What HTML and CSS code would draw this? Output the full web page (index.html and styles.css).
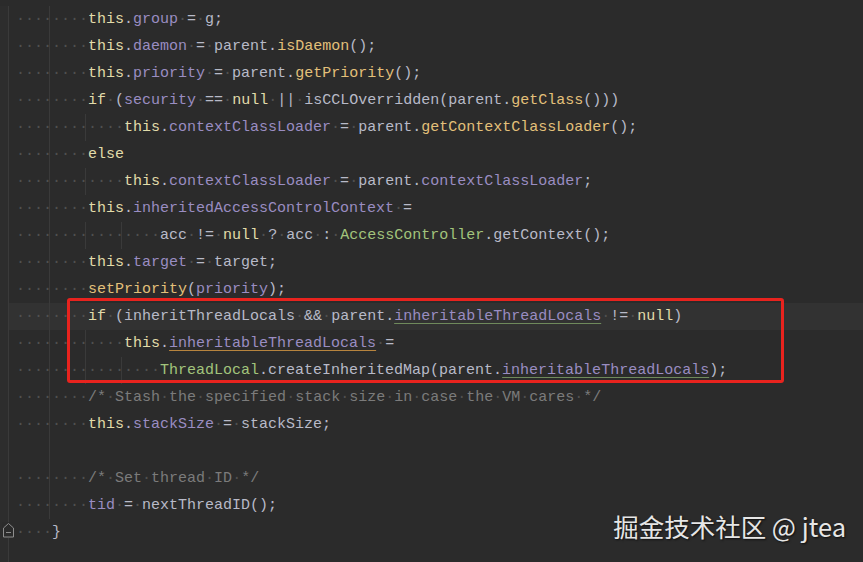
FILE: index.html
```html
<!DOCTYPE html>
<html lang="zh">
<head>
<meta charset="utf-8">
<title>Thread init</title>
<link rel="stylesheet" href="styles.css">
</head>
<body>
<div class="editor">
  <div class="row g1"><div class="gut"></div><div class="code"><span class="w">········</span><span class="k">this</span>.<span class="f">group</span><span class="w">·</span>=<span class="w">·</span>g;</div></div>
  <div class="row g1"><div class="gut"></div><div class="code"><span class="w">········</span><span class="k">this</span>.<span class="f">daemon</span><span class="w">·</span>=<span class="w">·</span>parent.<span class="m">isDaemon</span>();</div></div>
  <div class="row g1"><div class="gut"></div><div class="code"><span class="w">········</span><span class="k">this</span>.<span class="f">priority</span><span class="w">·</span>=<span class="w">·</span>parent.<span class="m">getPriority</span>();</div></div>
  <div class="row g1"><div class="gut"></div><div class="code"><span class="w">········</span><span class="k">if</span><span class="w">·</span>(<span class="f">security</span><span class="w">·</span>==<span class="w">·</span><span class="k">null</span><span class="w">·</span>||<span class="w">·</span>isCCLOverridden(parent.<span class="m">getClass</span>()))</div></div>
  <div class="row g2"><div class="gut"></div><div class="code"><span class="w">············</span><span class="k">this</span>.<span class="f">contextClassLoader</span><span class="w">·</span>=<span class="w">·</span>parent.<span class="m">getContextClassLoader</span>();</div></div>
  <div class="row g1"><div class="gut"></div><div class="code"><span class="w">········</span><span class="k">else</span></div></div>
  <div class="row g2"><div class="gut"></div><div class="code"><span class="w">············</span><span class="k">this</span>.<span class="f">contextClassLoader</span><span class="w">·</span>=<span class="w">·</span>parent.<span class="f">contextClassLoader</span>;</div></div>
  <div class="row g1"><div class="gut"></div><div class="code"><span class="w">········</span><span class="k">this</span>.<span class="f">inheritedAccessControlContext</span><span class="w">·</span>=</div></div>
  <div class="row g3"><div class="gut"></div><div class="code"><span class="w">················</span>acc<span class="w">·</span>!=<span class="w">·</span><span class="k">null</span><span class="w">·</span>?<span class="w">·</span>acc<span class="w">·</span>:<span class="w">·</span><span class="c">AccessController</span>.getContext();</div></div>
  <div class="row g1"><div class="gut"></div><div class="code"><span class="w">········</span><span class="k">this</span>.<span class="f">target</span><span class="w">·</span>=<span class="w">·</span>target;</div></div>
  <div class="row g1"><div class="gut"></div><div class="code"><span class="w">········</span><span class="m">setPriority</span>(<span class="f">priority</span>);</div></div>
  <div class="row g1 cur"><div class="gut"></div><div class="code"><span class="w">········</span><span class="k">if</span><span class="w">·</span>(inheritThreadLocals<span class="w">·</span>&amp;&amp;<span class="w">·</span>parent.<span class="f ug">inheritableThreadLocals</span><span class="w">·</span>!=<span class="w">·</span><span class="k">null</span>)</div></div>
  <div class="row g2"><div class="gut"></div><div class="code"><span class="w">············</span><span class="k">this</span>.<span class="f uo">inheritableThreadLocals</span><span class="w">·</span>=</div></div>
  <div class="row g3"><div class="gut"></div><div class="code"><span class="w">················</span><span class="c">ThreadLocal</span>.createInheritedMap(parent.<span class="f ug">inheritableThreadLocals</span>);</div></div>
  <div class="row g1"><div class="gut"></div><div class="code"><span class="w">········</span><span class="cm">/*<span class="w">·</span>Stash<span class="w">·</span>the<span class="w">·</span>specified<span class="w">·</span>stack<span class="w">·</span>size<span class="w">·</span>in<span class="w">·</span>case<span class="w">·</span>the<span class="w">·</span>VM<span class="w">·</span>cares<span class="w">·</span>*/</span></div></div>
  <div class="row g1"><div class="gut"></div><div class="code"><span class="w">········</span><span class="k">this</span>.<span class="f">stackSize</span><span class="w">·</span>=<span class="w">·</span>stackSize;</div></div>
  <div class="row g1"><div class="gut"></div><div class="code"></div></div>
  <div class="row g1"><div class="gut"></div><div class="code"><span class="w">········</span><span class="cm">/*<span class="w">·</span>Set<span class="w">·</span>thread<span class="w">·</span>ID<span class="w">·</span>*/</span></div></div>
  <div class="row g1"><div class="gut"></div><div class="code"><span class="w">········</span><span class="f">tid</span><span class="w">·</span>=<span class="w">·</span>nextThreadID();</div></div>
  <div class="row"><div class="gut fold"><svg class="fold-icon" width="13" height="16" viewBox="0 0 13 16"><path d="M1.5 6 L6.5 1.5 L11.5 6 V15 H1.5 Z" fill="none" stroke="#8d8d8d" stroke-width="1"/><path d="M4 10.5 H9" stroke="#8d8d8d" stroke-width="1"/></svg></div><div class="code"><span class="w">····</span>}</div></div>
  <div class="row filler"><div class="gut"></div><div class="code"></div></div>

  <div class="highlight-box"></div>
  <div class="watermark">掘金技术社区 @ jtea</div>
</div>
</body>
</html>
```

FILE: styles.css
```css
html, body {
  margin: 0;
  padding: 0;
  background: #2b2b2b;
}

.editor {
  position: relative;
  width: 863px;
  height: 562px;
  overflow: hidden;
  display: flex;
  flex-direction: column;
  padding-top: 6px;
  box-sizing: border-box;
  background: #2b2b2b;
  font-family: "Liberation Mono", "DejaVu Sans Mono", monospace;
  font-size: 15px;
  color: #b8bac8;
}

.row {
  display: grid;
  grid-template-columns: 9px 1fr;
  height: 27px;
  flex: none;
}

.row.filler {
  flex: 1;
}

.gut {
  box-sizing: border-box;
  border-right: 1px solid #3a3a3a;
  background: #2d2d2d;
  position: relative;
}

.fold-icon {
  position: absolute;
  left: 2px;
  top: 3px;
  background: #2b2b2b;
}

.code {
  padding-left: 7px;
  line-height: 27px;
  white-space: pre;
  background-repeat: no-repeat;
}

.g1 .code {
  background-image: linear-gradient(#3a3a3a, #3a3a3a);
  background-size: 1px 100%;
  background-position: 40px 0;
}

.g2 .code {
  background-image: linear-gradient(#3a3a3a, #3a3a3a), linear-gradient(#3a3a3a, #3a3a3a);
  background-size: 1px 100%, 1px 100%;
  background-position: 40px 0, 76px 0;
}

.g3 .code {
  background-image: linear-gradient(#3a3a3a, #3a3a3a), linear-gradient(#3a3a3a, #3a3a3a), linear-gradient(#3a3a3a, #3a3a3a);
  background-size: 1px 100%, 1px 100%, 1px 100%;
  background-position: 40px 0, 76px 0, 112px 0;
}

.cur .code {
  background-color: #323232;
}

.w {
  color: #505050;
}

.k {
  color: #e2dcaa;
}

.f {
  color: #9a8dc2;
}

.m {
  color: #e3c07a;
}

.c {
  color: #a2c47c;
}

.cm {
  color: #7b7b7b;
}

.ug {
  text-decoration: underline;
  text-decoration-color: #6f8a5c;
  text-underline-offset: 3px;
}

.uo {
  text-decoration: underline;
  text-decoration-color: #b7843e;
  text-underline-offset: 3px;
}

.highlight-box {
  position: absolute;
  left: 67px;
  top: 298px;
  width: 717px;
  height: 85px;
  box-sizing: border-box;
  border: 3px solid #e8231e;
  border-radius: 3px;
}

.watermark {
  position: absolute;
  right: 17px;
  top: 508px;
  font-family: "Noto Sans CJK SC", "Noto Sans", sans-serif;
  font-size: 25.5px;
  line-height: 36px;
  color: #e6e6e6;
  text-shadow: 1px 1px 2px rgba(0, 0, 0, 0.7);
  white-space: nowrap;
}
```
